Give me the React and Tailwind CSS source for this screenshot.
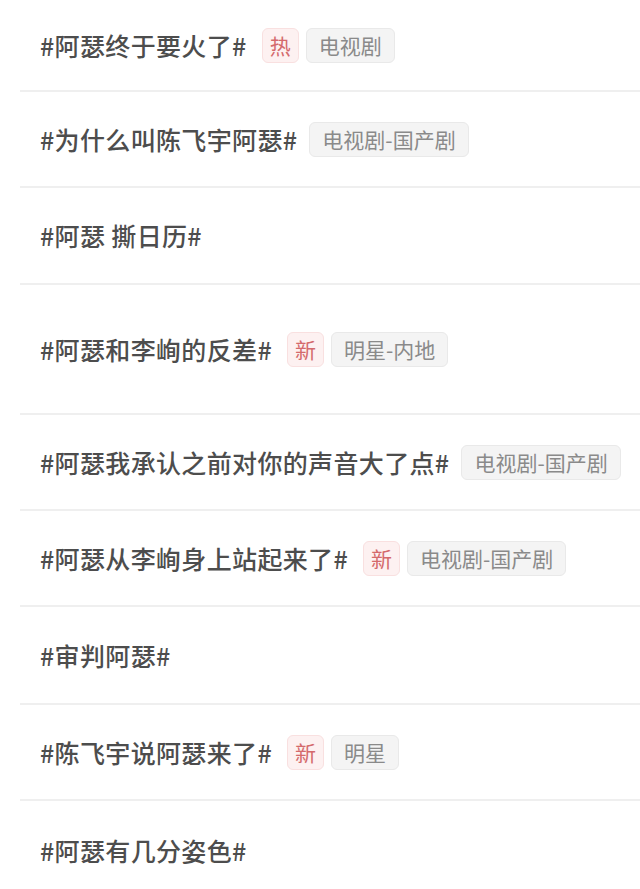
const topics = [
  { title: '#阿瑟终于要火了#', flag: '热', tag: '电视剧', h: 'h-[92px]' },
  { title: '#为什么叫陈飞宇阿瑟#', tag: '电视剧-国产剧', h: 'h-[96px]' },
  { title: '#阿瑟 撕日历#', h: 'h-[97px]' },
  { title: '#阿瑟和李峋的反差#', flag: '新', tag: '明星-内地', h: 'h-[130px]' },
  { title: '#阿瑟我承认之前对你的声音大了点#', tag: '电视剧-国产剧', h: 'h-[96px]' },
  { title: '#阿瑟从李峋身上站起来了#', flag: '新', tag: '电视剧-国产剧', h: 'h-[96px]' },
  { title: '#审判阿瑟#', h: 'h-[98px]' },
  { title: '#陈飞宇说阿瑟来了#', flag: '新', tag: '明星', h: 'h-[96px]' },
  { title: '#阿瑟有几分姿色#', h: 'h-[98px]' },
];

const TopicRow = ({ topic, last }) => (
  <div className={`${topic.h} flex items-center pl-[20px] ${last ? '' : 'border-b-2 border-[#efefef]'}`}>
    <span className="text-[25px] font-medium tracking-[0.35px] text-[#4d4d4d] leading-none whitespace-nowrap">
      {topic.title}
    </span>
    {topic.flag && (
      <span className="ml-[15px] h-[35px] px-[7px] flex items-center rounded-[6px] bg-[#fdf1f1] border border-[#f9e0e0] text-[21px] text-[#d46a6c] leading-none">
        {topic.flag}
      </span>
    )}
    {topic.tag && (
      <span
        className={`${topic.flag ? 'ml-[7px]' : 'ml-[12px]'} h-[35px] px-[12px] flex items-center rounded-[6px] bg-[#f4f4f4] border border-[#e9e9e9] text-[21px] text-[#8a8a8a] leading-none whitespace-nowrap`}
      >
        {topic.tag}
      </span>
    )}
  </div>
);

export default function App() {
  return (
    <div className="w-[640px] h-[889px] overflow-hidden bg-white" style={{ fontFamily: '"Noto Sans CJK SC", "Noto Sans", sans-serif' }}>
      <div className="ml-[20px]">
        {topics.map((t, i) => (
          <TopicRow key={i} topic={t} last={i === topics.length - 1} />
        ))}
      </div>
    </div>
  );
}
